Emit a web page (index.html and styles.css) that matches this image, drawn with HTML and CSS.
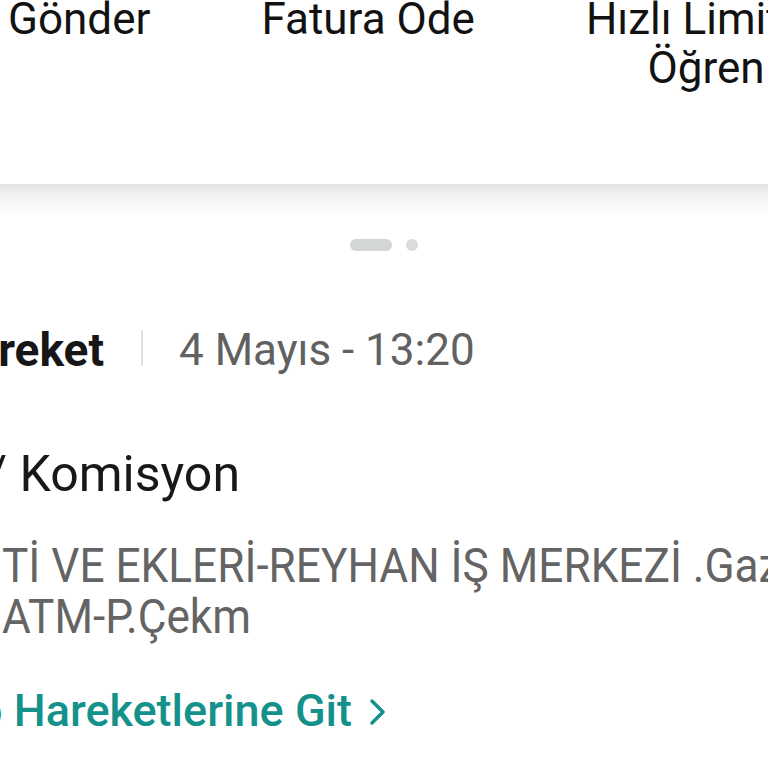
FILE: index.html
```html
<!DOCTYPE html>
<html lang="tr">
<head>
  <meta charset="UTF-8" />
  <meta name="viewport" content="width=device-width, initial-scale=1.0"/>
  <title>Kart Detay</title>
  <link rel="stylesheet" href="styles.css">
</head>
<body>
  <div class="top">
    <div class="shortcuts">
      <div class="shortcut">Gönder</div>
      <div class="shortcut">Fatura Ode</div>
      <div class="shortcut">Hızlı Limitini<br>Öğren</div>
    </div>
  </div>

  <div class="card">
    <div class="dots">
      <span class="dot active"></span>
      <span class="dot"></span>
    </div>

    <div class="title-row">
      <div class="title-box"><span class="title">Son Hareket</span></div>
      <span class="divider"></span>
      <span class="date">4 Mayıs - 13:20</span>
    </div>

    <div class="kind-box"><span class="kind">Ücret / Komisyon</span></div>

    <div class="desc">
      <div class="desc-line">Tİ VE EKLERİ-REYHAN İŞ MERKEZİ .Gaziantep</div>
      <div class="desc-line">ATM-P.Çekm</div>
    </div>

    <a class="link" href="#">
      <span class="link-box"><span class="link-text">Hesabo Hareketlerine Git</span></span>
      <svg class="chevron" width="16" height="26" viewBox="0 0 16 26">
        <polyline points="2,2 13,13 2,24" fill="none" stroke="currentColor" stroke-width="3.4" stroke-linecap="round" stroke-linejoin="round"/>
      </svg>
    </a>
  </div>
</body>
</html>
```

FILE: styles.css
```css
body {
  margin: 0;
  font-family: Roboto, "Noto Sans", sans-serif;
  background: #fff;
  color: #161616;
  overflow: hidden;
}

.top {
  display: flow-root;
  height: 184px;
  background: #fff;
}

.shortcuts {
  display: flex;
  gap: 111px;
  padding-left: 8px;
  margin-top: -5px;
}

.shortcut {
  flex-shrink: 0;
  font-size: 44px;
  line-height: 49px;
  text-align: center;
  white-space: nowrap;
  color: #121212;
}

.card {
  height: 584px;
  background: linear-gradient(to bottom, #e3e3e3 0, #eeeeee 8px, #f7f7f7 18px, #fff 32px);
  display: flow-root;
}

.dots {
  display: flex;
  justify-content: center;
  gap: 14px;
  padding-top: 55px;
}

.dot {
  width: 12px;
  height: 12px;
  border-radius: 6px;
  background: #dadcdc;
}

.dot.active {
  width: 42px;
  background: #d3d6d6;
}

.title-row {
  display: flex;
  align-items: center;
  height: 50px;
  margin-top: 74px;
  white-space: nowrap;
}

.title-box {
  width: 104px;
  flex-shrink: 0;
  display: flex;
  justify-content: flex-end;
}

.title {
  font-size: 46px;
  line-height: 50px;
  font-weight: 700;
  color: #161616;
}

.divider {
  width: 2px;
  height: 36px;
  background: #dfdfdf;
  margin: -4px 36px 0 37px;
  flex-shrink: 0;
}

.date {
  font-size: 44px;
  line-height: 50px;
  color: #616161;
}

.kind-box {
  width: 240px;
  display: flex;
  justify-content: flex-end;
  margin-top: 73px;
}

.kind {
  font-size: 50px;
  line-height: 52px;
  white-space: nowrap;
  color: #181818;
}

.desc {
  margin-top: 40px;
  padding-left: 2px;
  font-size: 48px;
  line-height: 51px;
  color: #646464;
}

.desc-line {
  white-space: nowrap;
  transform: scaleX(0.92);
  transform-origin: left center;
}

.link {
  display: flex;
  align-items: center;
  margin-top: 44px;
  color: #15918b;
  text-decoration: none;
}

.link-box {
  width: 352px;
  flex-shrink: 0;
  display: flex;
  justify-content: flex-end;
}

.link-text {
  font-size: 45px;
  line-height: 50px;
  font-weight: 500;
  white-space: nowrap;
}

.chevron {
  margin-left: 18px;
  margin-top: 2px;
}
```
